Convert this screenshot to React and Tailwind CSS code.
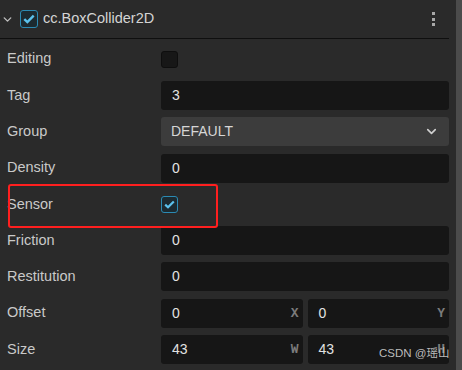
import { ChevronDown } from "lucide-react";

const ROWS = [
  { label: "Editing", kind: "check", checked: false },
  { label: "Tag", kind: "input", value: "3" },
  { label: "Group", kind: "select", value: "DEFAULT" },
  { label: "Density", kind: "input", value: "0" },
  { label: "Sensor", kind: "check", checked: true },
  { label: "Friction", kind: "input", value: "0" },
  { label: "Restitution", kind: "input", value: "0" },
  { label: "Offset", kind: "pair", values: [["0", "X"], ["0", "Y"]] },
  { label: "Size", kind: "pair", values: [["43", "W"], ["43", "H"]] },
];

function Check({ checked }) {
  return (
    <div
      className={`w-[17px] h-[17px] rounded-[3px] border flex items-center justify-center ${
        checked ? "border-[#2b8ab3] bg-[#1c2a30]" : "border-[#0e0e0e] bg-[#171717]"
      }`}
    >
      {checked && (
        <svg width="11" height="9" viewBox="0 0 11 9">
          <path d="M1.2 4.6 L4 7.3 L9.8 1.4" fill="none" stroke="#5cc2ec" strokeWidth="2.2" />
        </svg>
      )}
    </div>
  );
}

function Field({ row }) {
  if (row.kind === "check") return <Check checked={row.checked} />;
  if (row.kind === "select")
    return (
      <div className="h-full flex-1 bg-[#3c3c3c] rounded-[3px] flex items-center justify-between pl-[10px] pr-[10px] text-[#d6d6d6]">
        <span>{row.value}</span>
        <ChevronDown size={15} strokeWidth={2.6} color="#cfcfcf" />
      </div>
    );
  if (row.kind === "pair")
    return (
      <div className="h-full flex-1 flex gap-[5px]">
        {row.values.map(([v, axis], i) => (
          <div key={i} className="flex-1 h-full bg-[#161616] rounded-[3px] flex items-center justify-between pl-[11px] pr-[4px]">
            <span className="text-[#e2e2e2]">{v}</span>
            <span className="text-[#7c7c7c] text-[13px] font-bold font-['Liberation_Mono',monospace]">{axis}</span>
          </div>
        ))}
      </div>
    );
  return (
    <div className="h-full flex-1 bg-[#161616] rounded-[3px] flex items-center pl-[11px] text-[#e2e2e2]">
      {row.value}
    </div>
  );
}

export default function App() {
  return (
    <div className="relative w-[462px] h-[370px] overflow-hidden bg-[#2a2a2a] font-['Liberation_Sans',Arial,sans-serif] text-[14px] flex">
      <div className="flex-1 flex flex-col">
        {/* Header */}
        <div className="h-[39px] mr-[7px] border-b border-[#0f0f0f] flex items-center pl-[1px] pr-[14px]">
          <ChevronDown size={13} strokeWidth={2.6} color="#bdbdbd" />
          <div className="ml-[6px] w-[18px] h-[18px] rounded-[3px] border border-[#2b8ab3] bg-[#1c2a30] flex items-center justify-center">
            <svg width="12" height="10" viewBox="0 0 11 9">
              <path d="M1.2 4.6 L4 7.3 L9.8 1.4" fill="none" stroke="#5cc2ec" strokeWidth="2.2" />
            </svg>
          </div>
          <span className="ml-[5px] text-[#d4d4d4] text-[14.5px]">cc.BoxCollider2D</span>
          <div className="ml-auto flex flex-col gap-[2.5px]">
            <div className="w-[3px] h-[3px] bg-[#a8a8a8]" />
            <div className="w-[3px] h-[3px] bg-[#a8a8a8]" />
            <div className="w-[3px] h-[3px] bg-[#a8a8a8]" />
          </div>
        </div>

        {/* Properties */}
        <div className="flex flex-col gap-[7.3px] pt-[5.7px] pl-[7px] pr-[7px]">
          {ROWS.map((row) => (
            <div key={row.label} className="h-[29px] flex items-center">
              <div className="w-[154px] text-[#c9c9c9] text-[14.5px]">{row.label}</div>
              <Field row={row} />
            </div>
          ))}
        </div>
      </div>

      {/* Scrollbar */}
      <div className="w-[6px] bg-[#4b4b4b]" />

      {/* Highlight box */}
      <div className="absolute left-[8px] top-[184px] w-[210px] h-[44px] border-[2.5px] border-[#ff1f1f] rounded-[3px]" />

      {/* Watermark */}
      <div className="absolute left-[379px] top-[345px] text-[11.5px] text-[#cfcfcf]/90 font-['Liberation_Sans','Noto_Sans_CJK_SC',sans-serif]">
        CSDN @瑶山
      </div>
    </div>
  );
}
